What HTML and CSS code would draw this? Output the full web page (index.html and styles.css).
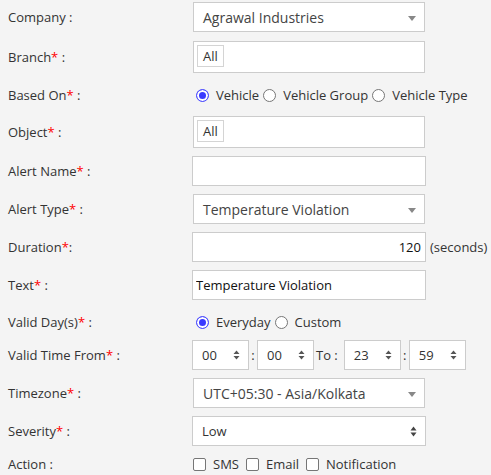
FILE: index.html
```html
<!DOCTYPE html>
<html>
<head>
<meta charset="utf-8">
<link rel="stylesheet" href="styles.css">
</head>
<body>
<form class="form">
  <div class="row first">
    <label class="lbl">Company :</label>
    <div class="s2"><span class="s2-text">Agrawal Industries</span><b class="s2-arrow"></b></div>
  </div>
  <div class="row multi">
    <label class="lbl">Branch<span class="req">*</span> :</label>
    <div class="s2 s2-multi"><span class="tag">All</span></div>
  </div>
  <div class="row choice">
    <label class="lbl">Based On<span class="req">*</span> :</label>
    <div class="opts">
      <label class="opt"><input type="radio" name="based" checked>Vehicle</label>
      <label class="opt"><input type="radio" name="based">Vehicle Group</label>
      <label class="opt"><input type="radio" name="based">Vehicle Type</label>
    </div>
  </div>
  <div class="row multi">
    <label class="lbl">Object<span class="req">*</span> :</label>
    <div class="s2 s2-multi"><span class="tag">All</span></div>
  </div>
  <div class="row">
    <label class="lbl">Alert Name<span class="req">*</span> :</label>
    <input class="inp" type="text" value="">
  </div>
  <div class="row">
    <label class="lbl">Alert Type<span class="req">*</span> :</label>
    <div class="s2"><span class="s2-text">Temperature Violation</span><b class="s2-arrow"></b></div>
  </div>
  <div class="row">
    <label class="lbl">Duration<span class="req">*</span>:</label>
    <div class="with-unit">
      <input class="inp num" type="text" value="120">
      <span class="unit">(seconds)</span>
    </div>
  </div>
  <div class="row">
    <label class="lbl">Text<span class="req">*</span> :</label>
    <input class="inp" type="text" value="Temperature Violation">
  </div>
  <div class="row choice">
    <label class="lbl">Valid Day(s)<span class="req">*</span> :</label>
    <div class="opts">
      <label class="opt"><input type="radio" name="day" checked>Everyday</label>
      <label class="opt"><input type="radio" name="day">Custom</label>
    </div>
  </div>
  <div class="row tight">
    <label class="lbl">Valid Time From<span class="req">*</span> :</label>
    <div class="times">
      <div class="spin"><span>00</span><svg class="spin-ic" width="7" height="10" viewBox="0 0 7 10"><path d="M3.5 0.5L6.5 4H0.5z M0.5 6h6L3.5 9.5z" fill="#555"/></svg></div>
      <span class="sep">:</span>
      <div class="spin"><span>00</span><svg class="spin-ic" width="7" height="10" viewBox="0 0 7 10"><path d="M3.5 0.5L6.5 4H0.5z M0.5 6h6L3.5 9.5z" fill="#555"/></svg></div>
      <span class="to">To :</span>
      <div class="spin"><span>23</span><svg class="spin-ic" width="7" height="10" viewBox="0 0 7 10"><path d="M3.5 0.5L6.5 4H0.5z M0.5 6h6L3.5 9.5z" fill="#555"/></svg></div>
      <span class="sep">:</span>
      <div class="spin"><span>59</span><svg class="spin-ic" width="7" height="10" viewBox="0 0 7 10"><path d="M3.5 0.5L6.5 4H0.5z M0.5 6h6L3.5 9.5z" fill="#555"/></svg></div>
    </div>
  </div>
  <div class="row">
    <label class="lbl">Timezone<span class="req">*</span> :</label>
    <div class="s2"><span class="s2-text">UTC+05:30 - Asia/Kolkata</span><b class="s2-arrow"></b></div>
  </div>
  <div class="row">
    <label class="lbl">Severity<span class="req">*</span> :</label>
    <div class="nsel"><span>Low</span><svg class="nsel-ic" width="7" height="11" viewBox="0 0 7 11"><path d="M3.5 0.5L6.5 4.5H0.5z M0.5 6.5h6L3.5 10.5z" fill="#444"/></svg></div>
  </div>
  <div class="row choice last">
    <label class="lbl">Action :</label>
    <div class="opts">
      <label class="opt chk"><input type="checkbox">SMS</label>
      <label class="opt chk"><input type="checkbox">Email</label>
      <label class="opt chk"><input type="checkbox">Notification</label>
    </div>
  </div>
</form>
</body>
</html>
```
FILE: styles.css
```css
html, body {
  margin: 0;
  padding: 0;
  background: #f4f4f4;
}
body {
  font-family: "Open Sans", "Liberation Sans", sans-serif;
  font-size: 13px;
  color: #333;
  width: 491px;
  height: 475px;
  overflow: hidden;
}
.form {
  display: flex;
  flex-direction: column;
  padding: 2px 0 0 8px;
  margin: 0;
}
.row {
  display: grid;
  grid-template-columns: 184px auto;
  align-items: center;
  height: 30px;
  margin-top: 8px;
}
.row.first { margin-top: 0; }
.row.multi { height: 32px; margin-top: 9px; }
.row.choice { height: 24px; margin-top: 10px; }
.row.tight { margin-top: 6px; }
.row.last { margin-top: 6px; }
.lbl {
  color: #333;
  white-space: nowrap;
}
.req { color: #f00; }

.s2 {
  box-sizing: border-box;
  width: 232px;
  height: 30px;
  margin-left: 1px;
  background: #fff;
  border: 1px solid #ccc;
  display: flex;
  align-items: center;
  padding: 0 8px 0 9px;
  font-size: 14px;
  color: #444;
}
.s2-text { flex: 1; white-space: nowrap; }
.s2-arrow {
  width: 0;
  height: 0;
  border-left: 4px solid transparent;
  border-right: 4px solid transparent;
  border-top: 5px solid #888;
  margin-top: 3px;
}
.s2-multi {
  height: 32px;
  align items: flex-start;
  align-items: flex-start;
  padding: 3px;
}
.tag {
  box-sizing: border-box;
  height: 22px;
  padding: 0 5px;
  border: 1px solid #d4d4d4;
  background: #fff;
  font-size: 13px;
  color: #333;
  line-height: 20px;
}

.inp {
  box-sizing: border-box;
  width: 234px;
  height: 30px;
  margin: 0;
  border: 1px solid #ccc;
  background: #fff;
  padding: 0 3px;
  font-family: "Open Sans", "Liberation Sans", sans-serif;
  font-size: 13px;
  color: #111;
  outline: none;
}
.num { text-align: right; padding-right: 4px; }
.with-unit { display: flex; align-items: center; }
.unit { margin-left: 4px; color: #333; white-space: nowrap; }

.opts {
  display: flex;
  align-items: center;
  white-space: nowrap;
}
.opt {
  display: flex;
  align-items: center;
  color: #333;
  margin-right: 4px;
}
.opt input {
  -webkit-appearance: none;
  appearance: none;
  box-sizing: border-box;
  width: 13px;
  height: 13px;
  margin: 0 7px 0 4px;
  border: 1px solid #767676;
  border-radius: 50%;
  background: #fff;
}
.opts .opt:not(:first-child) input { margin-left: 0; }
.opt input:checked {
  border-color: #5050ff;
  background: #3a3aff;
  box-shadow: inset 0 0 0 2px #fff;
}
.opt.chk input {
  border-radius: 2px;
  margin: 0 7px 0 1px;
}
.opts .opt.chk:not(:first-child) input { margin-left: 3px; }

.times {
  display: flex;
  align-items: center;
}
.spin {
  box-sizing: border-box;
  width: 57px;
  height: 30px;
  border: 1px solid #ccc;
  background: #fff;
  display: flex;
  align-items: center;
  justify-content: space-between;
  padding: 0 8px 0 9px;
  color: #333;
}
.sep { width: 8px; text-align: center; }
.to { margin: 0 6px 0 2px; white-space: nowrap; }

.nsel {
  box-sizing: border-box;
  width: 234px;
  height: 30px;
  border: 1px solid #ccc;
  background: #fff;
  display: flex;
  align-items: center;
  justify-content: space-between;
  padding: 0 8px 0 9px;
  color: #333;
}
```
